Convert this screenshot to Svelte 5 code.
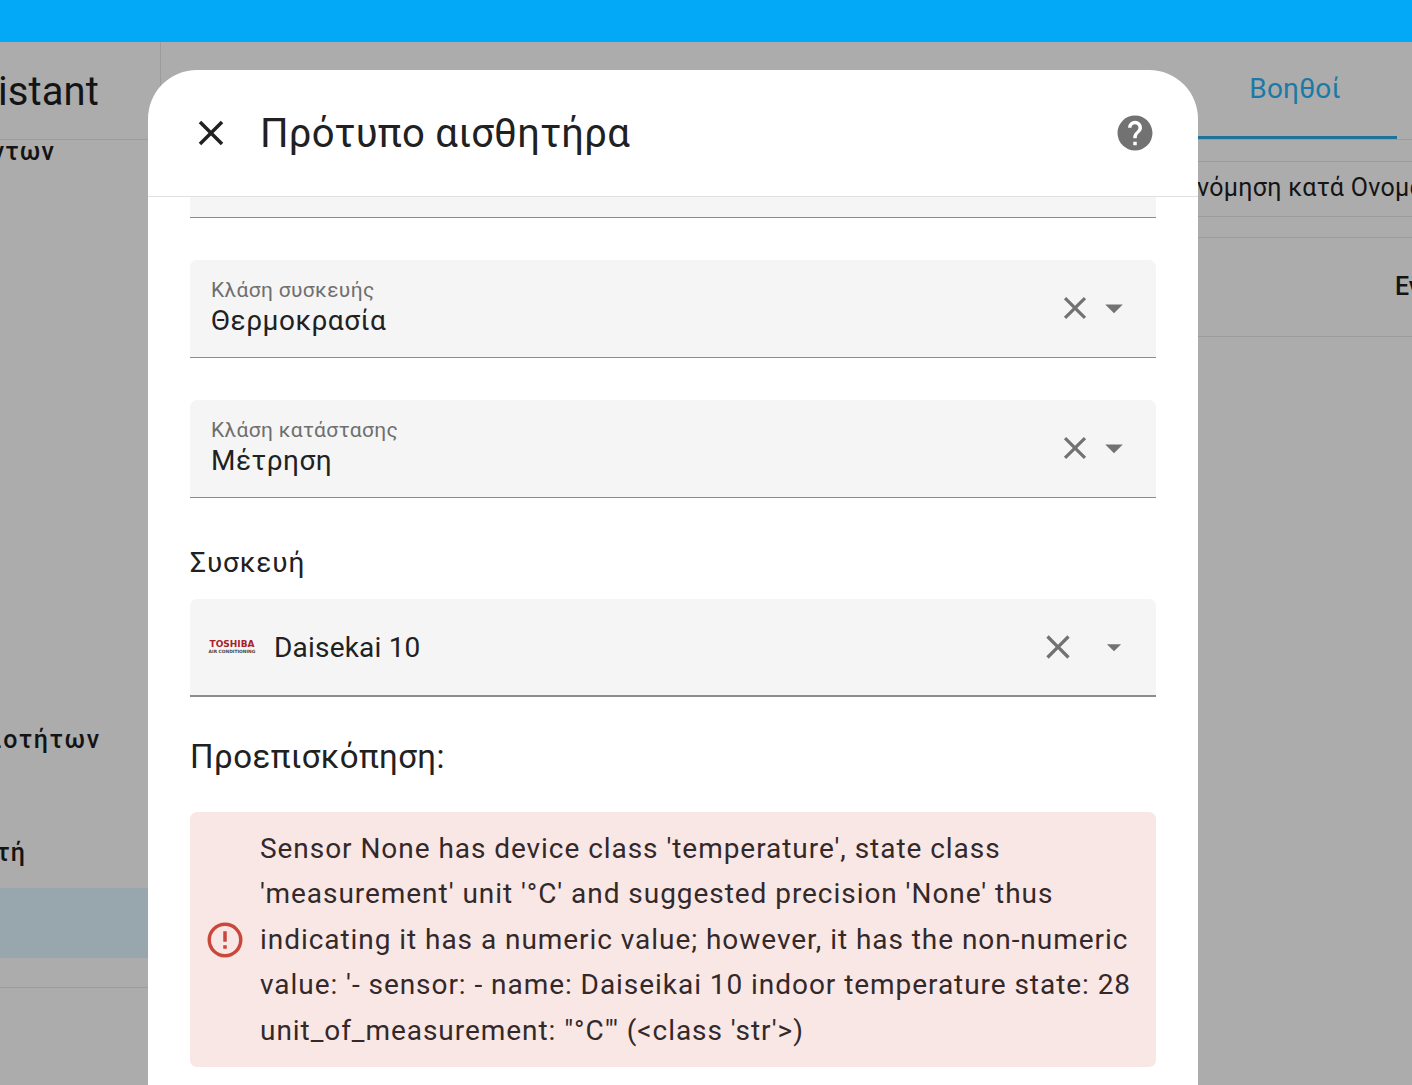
<script>
	let fields = [
		{ label: 'Κλάση συσκευής', value: 'Θερμοκρασία' },
		{ label: 'Κλάση κατάστασης', value: 'Μέτρηση' }
	];
	const mdiClose = 'M19,6.41L17.59,5L12,10.59L6.41,5L5,6.41L10.59,12L5,17.59L6.41,19L12,13.41L17.59,19L19,17.59L13.41,12L19,6.41Z';
	const mdiDown = 'M7,10L12,15L17,10H7Z';
	const mdiHelp = 'M15.07,11.25L14.17,12.17C13.45,12.89 13,13.5 13,15H11V14.5C11,13.39 11.45,12.39 12.17,11.67L13.41,10.41C13.78,10.05 14,9.55 14,9C14,7.89 13.1,7 12,7A2,2 0 0,0 10,9H8A4,4 0 0,1 12,5A4,4 0 0,1 16,9C16,9.88 15.64,10.67 15.07,11.25M13,19H11V17H13M12,2A10,10 0 0,0 2,12A10,10 0 0,0 12,22A10,10 0 0,0 22,12C22,6.47 17.5,2 12,2Z';
	const mdiAlert = 'M11,15H13V17H11V15M11,7H13V13H11V7M12,2C6.47,2 2,6.5 2,12A10,10 0 0,0 12,22A10,10 0 0,0 22,12A10,10 0 0,0 12,2M12,20A8,8 0 0,1 4,12A8,8 0 0,1 12,4A8,8 0 0,1 20,12A8,8 0 0,1 12,20Z';
</script>

<div class="page">
	<div class="topbar"></div>
	<div class="body">
		<aside class="sidebar">
			<div class="brand"><span>Home Assistant</span></div>
			<nav>
				<div class="item first"><span>συμβάντων</span></div>
				<div class="item second"><span>ιδιοτήτων</span></div>
				<div class="item third"><span>προγραμματιστή</span></div>
				<div class="item selected"></div>
				<div class="rule"></div>
			</nav>
		</aside>
		<main class="content">
			<div class="tabs">
				<div class="tab">Βοηθοί</div>
			</div>
			<div class="sortbar">Ταξινόμηση κατά Ονομα</div>
			<div class="row"><span>Ενεργό</span></div>
		</main>
	</div>

	<div class="dialog">
		<header>
			<svg class="ico close" viewBox="0 0 24 24"><path d={mdiClose} /></svg>
			<h2>Πρότυπο αισθητήρα</h2>
			<svg class="ico help" viewBox="0 0 24 24"><path d={mdiHelp} /></svg>
		</header>
		<div class="scroll">
			<div class="stub"></div>
			{#each fields as f}
				<div class="field">
					<div class="text">
						<span class="label">{f.label}</span>
						<span class="value">{f.value}</span>
					</div>
					<svg class="ico clear" viewBox="0 0 24 24"><path d={mdiClose} /></svg>
					<svg class="ico down" viewBox="0 0 24 24"><path d={mdiDown} /></svg>
				</div>
			{/each}
			<div class="device-title">Συσκευή</div>
			<div class="device">
				<div class="logo">
					<span class="logo-main">TOSHIBA</span>
					<span class="logo-sub">AIR CONDITIONING</span>
				</div>
				<span class="device-name">Daisekai 10</span>
				<svg class="ico clear2" viewBox="0 0 24 24"><path d={mdiClose} /></svg>
				<svg class="ico down2" viewBox="0 0 24 24"><path d={mdiDown} /></svg>
			</div>
			<h3>Προεπισκόπηση:</h3>
			<div class="alert">
				<svg class="ico warn" viewBox="0 0 24 24"><path d={mdiAlert} /></svg>
				<p>Sensor None has device class 'temperature', state class 'measurement' unit '°C' and suggested precision 'None' thus indicating it has a numeric value; however, it has the non-numeric value: '- sensor: - name: Daiseikai 10 indoor temperature state: 28 unit_of_measurement: "°C"' (&lt;class 'str'&gt;)</p>
			</div>
		</div>
	</div>
</div>

<style>
	:global(body) {
		margin: 0;
		font-family: Roboto, "Noto Sans", sans-serif;
	}
	.page {
		position: relative;
		width: 1412px;
		height: 1085px;
		overflow: hidden;
		background: #acacac;
		color: #141414;
	}
	.topbar {
		height: 42px;
		background: #03a9f6;
	}
	.body {
		display: flex;
		height: 1043px;
	}
	.sidebar {
		width: 160px;
		flex: none;
		border-right: 1px solid #9c9c9c;
		overflow: hidden;
	}
	.brand {
		height: 98px;
		box-sizing: border-box;
		border-bottom: 1px solid #9c9c9c;
		display: flex;
		justify-content: flex-end;
		align-items: center;
		padding: 2px 61px 0 0;
		font-size: 40px;
		letter-spacing: 0.1px;
		white-space: nowrap;
	}
	nav {
		height: 900px;
		overflow: hidden;
	}
	.item {
		display: flex;
		justify-content: flex-end;
		align-items: center;
		height: 70px;
		font-size: 25px;
		font-weight: 500;
		letter-spacing: 1.2px;
		white-space: nowrap;
	}
	.first {
		margin-top: -24px;
		padding-right: 105px;
	}
	.second {
		margin-top: 518px;
		padding-right: 59px;
		letter-spacing: 1.8px;
	}
	.third {
		margin-top: 43px;
		padding-right: 134px;
	}
	.selected {
		background: #98a6ad;
		margin-top: 1px;
	}
	.rule {
		margin-top: 29px;
		border-top: 1px solid #9c9c9c;
	}
	.content {
		flex: 1;
		min-width: 0;
		overflow: hidden;
	}
	.tabs {
		height: 98px;
		box-sizing: border-box;
		border-bottom: 1px solid #9c9c9c;
		display: flex;
		justify-content: flex-end;
		padding-right: 15px;
	}
	.tab {
		width: 204px;
		height: 97px;
		box-sizing: border-box;
		padding-top: 30px;
		text-align: center;
		font-size: 28px;
		letter-spacing: 0.2px;
		color: #1b7aa5;
		border-bottom: 3px solid #1f7399;
	}
	.sortbar {
		margin-top: 21px;
		height: 56px;
		box-sizing: border-box;
		border-top: 1px solid #9c9c9c;
		border-bottom: 1px solid #9c9c9c;
		padding-left: 987px;
		font-size: 25px;
		line-height: 51px;
		letter-spacing: 0.3px;
		white-space: nowrap;
	}
	.row {
		margin-top: 20px;
		height: 100px;
		box-sizing: border-box;
		border-top: 1px solid #9c9c9c;
		border-bottom: 1px solid #9c9c9c;
		padding-left: 1234px;
		font-size: 25px;
		font-weight: 500;
		line-height: 98px;
		white-space: nowrap;
	}
	.dialog {
		position: absolute;
		left: 148px;
		top: 70px;
		width: 1050px;
		height: 1100px;
		background: #fff;
		border-radius: 49px 49px 0 0;
		color: #212121;
	}
	header {
		height: 127px;
		box-sizing: border-box;
		border-bottom: 1px solid #e0e0e0;
		display: flex;
		align-items: center;
		padding: 0 24px 1px 42px;
	}
	h2 {
		margin: 0;
		flex: 1;
		font-size: 40px;
		font-weight: 400;
		letter-spacing: 0.3px;
		padding: 2px 0 0 28px;
	}
	.ico {
		flex: none;
		display: block;
		fill: #727272;
	}
	.close {
		width: 42px;
		height: 42px;
		fill: #212121;
	}
	.help {
		width: 42px;
		height: 42px;
		margin-right: 18px;
	}
	.scroll {
		padding: 0 42px;
	}
	.stub {
		height: 20px;
		background: #f5f5f5;
		border-bottom: 1px solid #8c8c8c;
		margin-bottom: 42px;
	}
	.field {
		height: 98px;
		box-sizing: border-box;
		background: #f5f5f5;
		border-radius: 7px 7px 0 0;
		border-bottom: 1px solid #8c8c8c;
		margin-bottom: 42px;
		display: flex;
		align-items: center;
		padding: 0 21px 2px;
	}
	.text {
		flex: 1;
		display: flex;
		flex-direction: column;
		padding-bottom: 2px;
	}
	.label {
		font-size: 21px;
		line-height: 28px;
		letter-spacing: 0.35px;
		color: #6f6f6f;
	}
	.value {
		font-size: 28px;
		line-height: 34px;
		letter-spacing: 0.5px;
	}
	.clear {
		width: 38px;
		height: 38px;
		margin-right: -1px;
	}
	.down {
		width: 42px;
		height: 42px;
		margin-right: 0;
	}
	.device-title {
		box-sizing: border-box;
		height: 59px;
		padding-top: 1px;
		font-size: 28px;
		line-height: 44px;
		letter-spacing: 0.9px;
	}
	.device {
		height: 98px;
		box-sizing: border-box;
		background: #f5f5f5;
		border-radius: 7px 7px 0 0;
		border-bottom: 2px solid #8c8c8c;
		display: flex;
		align-items: center;
		padding: 0 25px 0 18px;
	}
	.logo {
		width: 48px;
		display: flex;
		flex-direction: column;
		align-items: center;
		margin-right: 18px;
	}
	.logo-main {
		font-family: "DejaVu Sans", sans-serif;
		font-size: 9px;
		line-height: 9px;
		font-weight: 700;
		color: #a8222b;
		white-space: nowrap;
	}
	.logo-sub {
		font-family: "DejaVu Sans", sans-serif;
		font-size: 4.4px;
		line-height: 6px;
		font-weight: 700;
		color: #444;
		white-space: nowrap;
	}
	.device-name {
		flex: 1;
		font-size: 28px;
		letter-spacing: 0.2px;
	}
	.clear2 {
		width: 40px;
		height: 40px;
		margin-right: 19px;
	}
	.down2 {
		width: 34px;
		height: 34px;
	}
	h3 {
		margin: 0;
		padding-top: 36px;
		height: 115px;
		box-sizing: border-box;
		font-size: 33px;
		line-height: 48px;
		font-weight: 400;
		letter-spacing: 0.45px;
	}
	.alert {
		height: 255px;
		box-sizing: border-box;
		background: #f9e7e5;
		border-radius: 7px;
		display: flex;
		align-items: center;
		padding: 0 18px 0 14px;
	}
	.warn {
		width: 42px;
		height: 42px;
		fill: #c9483c;
		margin-right: 14px;
	}
	p {
		margin: 0;
		font-size: 28px;
		line-height: 45.5px;
		letter-spacing: 0.95px;
		color: #33292a;
	}
</style>
